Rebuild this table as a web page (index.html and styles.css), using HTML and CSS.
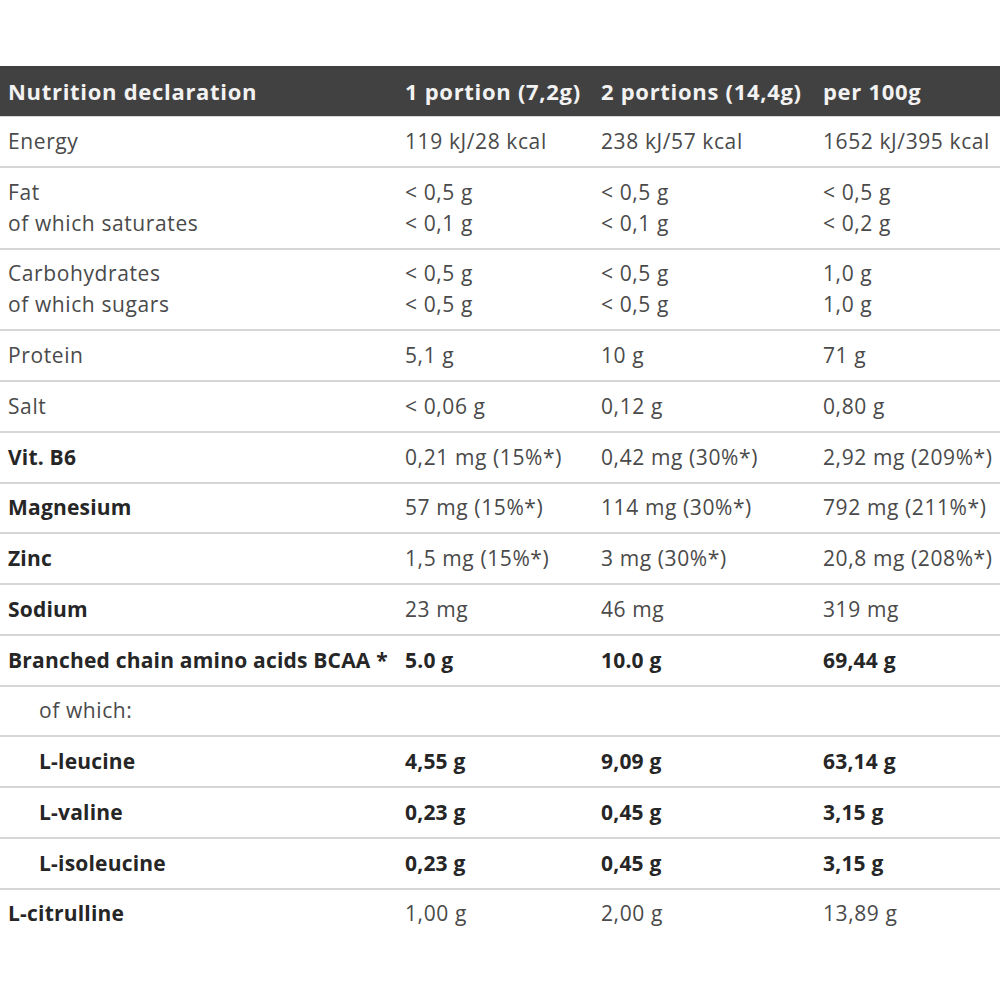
FILE: index.html
```html
<!DOCTYPE html>
<html lang="en">
<head>
<meta charset="utf-8">
<title>Nutrition declaration</title>
<link rel="stylesheet" href="styles.css">
</head>
<body>
<div class="table">
  <div class="row head">
    <div class="c1">Nutrition declaration</div>
    <div class="c2">1 portion (7,2g)</div>
    <div class="c3">2 portions (14,4g)</div>
    <div class="c4">per 100g</div>
  </div>
  <div class="row">
    <div class="c1">Energy</div>
    <div class="c2">119 kJ/28 kcal</div>
    <div class="c3">238 kJ/57 kcal</div>
    <div class="c4">1652 kJ/395 kcal</div>
  </div>
  <div class="row">
    <div class="c1">Fat<br>of which saturates</div>
    <div class="c2">&lt; 0,5 g<br>&lt; 0,1 g</div>
    <div class="c3">&lt; 0,5 g<br>&lt; 0,1 g</div>
    <div class="c4">&lt; 0,5 g<br>&lt; 0,2 g</div>
  </div>
  <div class="row">
    <div class="c1">Carbohydrates<br>of which sugars</div>
    <div class="c2">&lt; 0,5 g<br>&lt; 0,5 g</div>
    <div class="c3">&lt; 0,5 g<br>&lt; 0,5 g</div>
    <div class="c4">1,0 g<br>1,0 g</div>
  </div>
  <div class="row">
    <div class="c1">Protein</div>
    <div class="c2">5,1 g</div>
    <div class="c3">10 g</div>
    <div class="c4">71 g</div>
  </div>
  <div class="row">
    <div class="c1">Salt</div>
    <div class="c2">&lt; 0,06 g</div>
    <div class="c3">0,12 g</div>
    <div class="c4">0,80 g</div>
  </div>
  <div class="row">
    <div class="c1 b">Vit. B6</div>
    <div class="c2">0,21 mg (15%*)</div>
    <div class="c3">0,42 mg (30%*)</div>
    <div class="c4">2,92 mg (209%*)</div>
  </div>
  <div class="row">
    <div class="c1 b">Magnesium</div>
    <div class="c2">57 mg (15%*)</div>
    <div class="c3">114 mg (30%*)</div>
    <div class="c4">792 mg (211%*)</div>
  </div>
  <div class="row">
    <div class="c1 b">Zinc</div>
    <div class="c2">1,5 mg (15%*)</div>
    <div class="c3">3 mg (30%*)</div>
    <div class="c4">20,8 mg (208%*)</div>
  </div>
  <div class="row">
    <div class="c1 b">Sodium</div>
    <div class="c2">23 mg</div>
    <div class="c3">46 mg</div>
    <div class="c4">319 mg</div>
  </div>
  <div class="row">
    <div class="c1 b">Branched chain amino acids BCAA *</div>
    <div class="c2 b">5.0 g</div>
    <div class="c3 b">10.0 g</div>
    <div class="c4 b">69,44 g</div>
  </div>
  <div class="row">
    <div class="c1 indent">of which:</div>
    <div class="c2"></div>
    <div class="c3"></div>
    <div class="c4"></div>
  </div>
  <div class="row">
    <div class="c1 indent b">L-leucine</div>
    <div class="c2 b">4,55 g</div>
    <div class="c3 b">9,09 g</div>
    <div class="c4 b">63,14 g</div>
  </div>
  <div class="row">
    <div class="c1 indent b">L-valine</div>
    <div class="c2 b">0,23 g</div>
    <div class="c3 b">0,45 g</div>
    <div class="c4 b">3,15 g</div>
  </div>
  <div class="row">
    <div class="c1 indent b">L-isoleucine</div>
    <div class="c2 b">0,23 g</div>
    <div class="c3 b">0,45 g</div>
    <div class="c4 b">3,15 g</div>
  </div>
  <div class="row last">
    <div class="c1 b">L-citrulline</div>
    <div class="c2">1,00 g</div>
    <div class="c3">2,00 g</div>
    <div class="c4">13,89 g</div>
  </div>
</div>
</body>
</html>
```

FILE: styles.css
```css
html, body {
  margin: 0;
  padding: 0;
  background: #ffffff;
}
body {
  font-family: "Open Sans", "Liberation Sans", sans-serif;
  font-size: 21px;
  letter-spacing: 0.6px;
  color: #4a4a4a;
}
.table {
  margin-top: 66px;
  display: flex;
  flex-direction: column;
}
.row {
  display: grid;
  grid-template-columns: 405px 196px 222px 1fr;
  padding: 8.875px 0;
  line-height: 31px;
  border-bottom: 2px solid #d6d6d6;
  white-space: nowrap;
}
.row.head {
  background: #414141;
  color: #f2f2f2;
  font-weight: 700;
  font-size: 22px;
  letter-spacing: 0.7px;
  padding: 9.5px 0;
  border-bottom: 1px solid #d6d6d6;
}
.row.last {
  border-bottom: none;
}
.c1 {
  padding-left: 8px;
}
.b {
  font-weight: 700;
  letter-spacing: 0.2px;
  color: #262626;
}
.indent {
  padding-left: 39px;
}
```
